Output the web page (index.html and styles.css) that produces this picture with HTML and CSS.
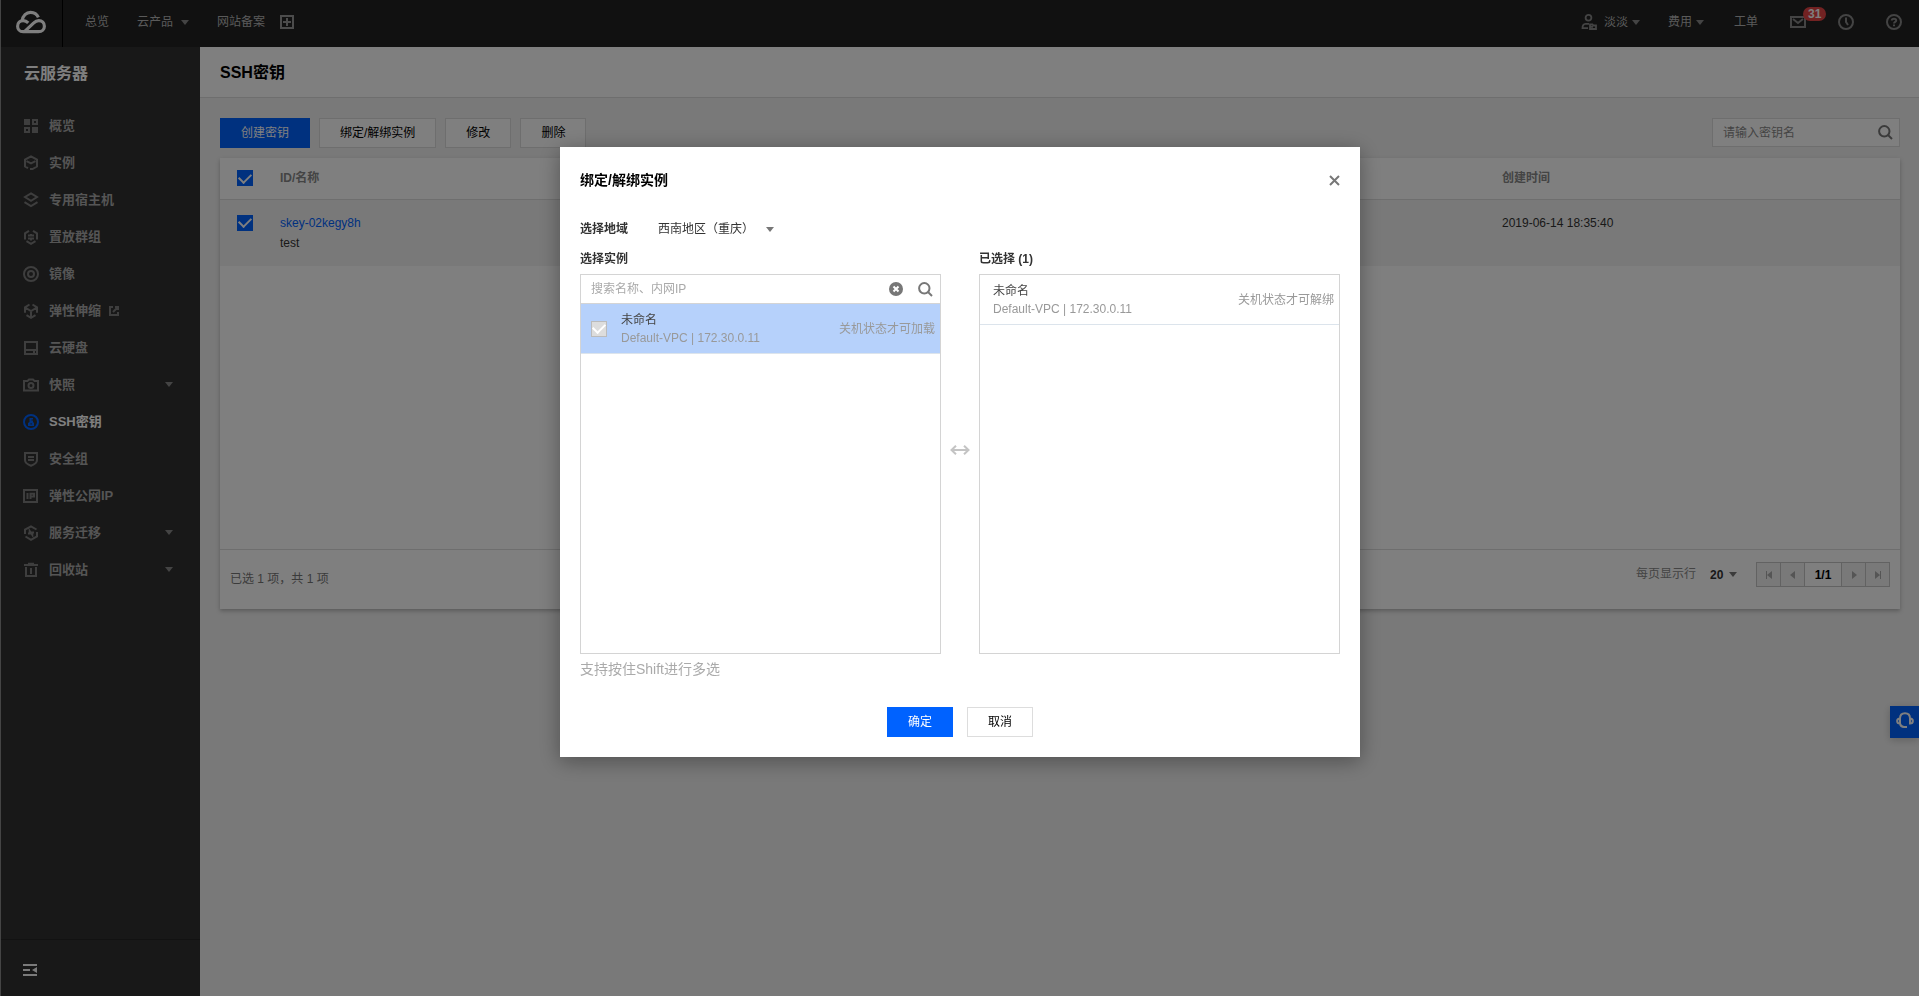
FILE: index.html
```html
<!DOCTYPE html>
<html lang="zh-CN">
<head>
<meta charset="utf-8">
<title>SSH密钥 - 云服务器</title>
<link rel="stylesheet" href="styles.css">
</head>
<body>
<div class="app">
  <header class="topbar">
    <a class="logo" href="#" aria-label="控制台首页">
      <svg width="32" height="24" viewBox="0 0 34 26" fill="none" stroke="#fff" stroke-width="3.400">
        <path d="M8.500 23.500C4.500 23.500 2.500 20.500 2.500 17.500C2.500 14 5 11.500 8.500 11.500C11 11.500 12.500 12.500 14 14M7.500 11.500C8 6 12 2.500 16.500 2.500C20.500 2.500 23.500 4.500 25 8M8.500 23.500H25C29 23.500 31.500 21 31.500 17.500C31.500 14 29 11.500 25.500 11.500C23 11.500 21.500 12.500 20 14L10.500 23"/>
      </svg>
    </a>
    <nav class="topnav">
      <a href="#">总览</a>
      <a href="#" class="nav-products">云产品<i class="caret"></i></a>
      <a href="#" class="nav-beian">网站备案</a>
      <button class="plain" type="button" aria-label="添加">
        <svg width="14" height="14" viewBox="0 0 14 14" fill="none" stroke="#999" stroke-width="2"><path d="M1 1h12v12H1zM7 3v8M3 7h8"/></svg>
      </button>
    </nav>
    <div class="topnav topnav-right">
      <a href="#" class="user">
        <svg width="16" height="16" viewBox="0 0 16 16" fill="none" stroke="#888" stroke-width="1.800"><circle cx="7.500" cy="3.800" r="2.900"/><path d="M8 9.800H4.500C2.500 9.800 1.500 11.500 1.500 14.200H7M9 10.500h2.500l.8 1H15v3.500H9zM9 12.800h3"/></svg>
        淡淡<i class="caret"></i></a>
      <a href="#" class="nav-fee">费用<i class="caret"></i></a>
      <a href="#" class="nav-ticket">工单</a>
      <a href="#" class="mail" aria-label="消息">
        <svg width="16" height="16" viewBox="0 0 16 16" fill="none" stroke="#888" stroke-width="2"><path d="M1 3h14v10H1zM3 5l5 4 5-4"/></svg>
        <span class="badge">31</span>
      </a>
      <a href="#" class="nav-icon" aria-label="历史">
        <svg width="16" height="16" viewBox="0 0 16 16" fill="none" stroke="#888" stroke-width="2"><circle cx="8" cy="8" r="7"/><path d="M8 3.500V8l2 3"/></svg>
      </a>
      <a href="#" class="nav-icon" aria-label="帮助">
        <svg width="16" height="16" viewBox="0 0 16 16" fill="none" stroke="#888" stroke-width="2"><circle cx="8" cy="8" r="7"/><path d="M5.800 6.500C5.800 4 10.200 4 10.200 6.500C10.200 8 8 7.800 8 9.600M8 10.600v1.600"/></svg>
      </a>
    </div>
  </header>

  <div class="body">
    <aside class="sidebar">
      <h2 class="side-title">云服务器</h2>
      <nav class="side-nav">
        <a href="#"><svg class="ico" viewBox="0 0 16 16"><path fill="currentColor" stroke="none" d="M1 1h6v6H1zM1 9m8 0h6v6H9z"/><path d="M10 2h4v4h-4zM2 10h4v4H2z"/></svg>概览</a>
        <a href="#"><svg class="ico" viewBox="0 0 16 16"><path d="M5 13.200L2 11.500V4.700L8 1.300l6 3.400v6.800l-4.500 2.600H7M3.500 6.200L8 8.500l4.500-2.300"/></svg>实例</a>
        <a href="#"><svg class="ico" viewBox="0 0 16 16"><path d="M8 1.300l6 3.700L8 8.800 2 5zM1.500 10.200L8 14.200l6.500-4"/></svg>专用宿主机</a>
        <a href="#"><svg class="ico" viewBox="0 0 16 16"><path d="M6 1.800L2 4.400v6M10 1.800l4 2.600v6M3.500 12.200L8 14.800l4.500-2.600M5 6.500h6M5 9.500h6M8 5v1M8 10v1.500"/></svg>置放群组</a>
        <a href="#"><svg class="ico" viewBox="0 0 16 16"><circle cx="8" cy="8" r="7"/><circle cx="8" cy="8" r="3"/></svg>镜像</a>
        <a href="#"><svg class="ico" viewBox="0 0 16 16"><path d="M6.500 1.500L2 4.300v5.500M9.500 1.500L14 4.300v5.500M3 5l5 3 5-3M8 8v7M3.500 12.200L8 14.800l4.500-2.600"/></svg>弹性伸缩<svg class="ext" width="10" height="10" viewBox="0 0 10 10"><path d="M4 1H1v8h8V6M6 1h3v3M9 1L4 6"/></svg></a>
        <a href="#"><svg class="ico" viewBox="0 0 16 16"><path d="M2 2h12v12H2zM2 10h12M11 10v4"/></svg>云硬盘</a>
        <a href="#"><svg class="ico" viewBox="0 0 16 16"><path d="M1 4h3.500L6 2.500h4L11.500 4H15v9.500H1z"/><circle cx="8" cy="8.500" r="2.500"/></svg>快照<i class="caret"></i></a>
        <a href="#" class="active" aria-current="page"><svg class="ico" viewBox="0 0 16 16"><circle cx="8" cy="8" r="7"/><path fill="currentColor" stroke="none" d="M6.500 4H10v1.500H8.500V6.500H10v1.500l1 1V12H5V9l1.500-1z"/><path fill="#303030" stroke="none" d="M7.500 9.300h1.200v1.200H7.500z"/></svg>SSH密钥</a>
        <a href="#"><svg class="ico" viewBox="0 0 16 16"><path d="M2 2h12v7C14 12 10 14 8 14.700 6 14 2 12 2 9zM5 6h6M5 9h6"/></svg>安全组</a>
        <a href="#"><svg class="ico" viewBox="0 0 16 16"><path d="M1 2h13v12H1zM4.500 5v6M7.500 11V5.800h3.500v2.700H7.500"/></svg>弹性公网IP</a>
        <a href="#"><svg class="ico" viewBox="0 0 16 16"><path d="M2 9V4.700L8 1.300l5.500 3.200M14 7v4.500l-6 3.300-5.500-3.300M5 8.500h1.700V6l2.600 4V7.500H11"/></svg>服务迁移<i class="caret"></i></a>
        <a href="#"><svg class="ico" viewBox="0 0 16 16"><path d="M1 3h14M5 1.800h6M3 5v9h10V5M8 6v6"/></svg>回收站<i class="caret"></i></a>
      </nav>
      <div class="side-foot">
        <button class="plain" type="button" aria-label="收起菜单">
          <svg width="14" height="12" viewBox="0 0 14 12" fill="#f4f4f4"><path d="M0 0h14v2H0zM0 5h7v2H0zM0 10h14v2H0zM9 6l5-3v6z"/></svg>
        </button>
      </div>
    </aside>

    <main class="main">
      <div class="page-head"><h1>SSH密钥</h1></div>
      <div class="content">
        <div class="toolbar">
          <button class="btn primary" type="button">创建密钥</button>
          <button class="btn" type="button">绑定/解绑实例</button>
          <button class="btn" type="button">修改</button>
          <button class="btn" type="button">删除</button>
          <div class="search">
            <input type="text" placeholder="请输入密钥名" aria-label="请输入密钥名">
            <button class="plain" type="button" aria-label="搜索"><svg width="15" height="15" viewBox="0 0 15 15" fill="none" stroke="#777" stroke-width="2"><circle cx="6.300" cy="6.300" r="5.200"/><path d="M10 10l4 4"/></svg></button>
          </div>
        </div>
        <section class="card">
          <div class="table-area">
            <table class="table">
              <thead>
                <tr><th class="col-check"><input type="checkbox" class="check" checked aria-label="全选"></th><th>ID/名称</th><th class="col-time">创建时间</th></tr>
              </thead>
              <tbody>
                <tr><td class="col-check"><input type="checkbox" class="check" checked aria-label="选择 skey-02kegy8h"></td><td><a href="#">skey-02kegy8h</a><br>test</td><td>2019-06-14 18:35:40</td></tr>
              </tbody>
            </table>
          </div>
          <div class="card-foot">
            <p class="summary">已选 1 项，共 1 项</p>
            <div class="paging">
              <label for="size">每页显示行</label>
              <span class="pick size-pick"><select id="size"><option>20</option></select><i class="caret"></i></span>
              <div class="pager">
                <button type="button" disabled aria-label="首页"><svg width="8" height="8" viewBox="0 0 8 8"><path d="M1 0h1v8H1zM7 0v8L2 4z"/></svg></button>
                <button type="button" disabled aria-label="上一页"><svg width="8" height="8" viewBox="0 0 8 8"><path d="M6 0v8L1 4z"/></svg></button>
                <span class="page-no">1/1</span>
                <button type="button" disabled aria-label="下一页"><svg width="8" height="8" viewBox="0 0 8 8"><path d="M2 0v8l5-4z"/></svg></button>
                <button type="button" disabled aria-label="末页"><svg width="8" height="8" viewBox="0 0 8 8"><path d="M6 0h1v8H6zM1 0v8l5-4z"/></svg></button>
              </div>
            </div>
          </div>
        </section>
      </div>
    </main>
  </div>
  <button class="support" type="button" aria-label="在线客服">
    <svg width="18" height="17" viewBox="0 0 18 17" fill="none" stroke="#fff" stroke-width="2"><path d="M4 11V6.500C4 3 6 1.200 9 1.200S14 3 14 6.500V11M4 6.500C.2 6.500.2 11.500 4 11.500zM14 6.500c3.800 0 3.800 5 0 5zM4 11.500C4.500 14 6 15 8 15h3"/></svg>
  </button>
</div>

<div class="overlay">
  <div class="modal" role="dialog" aria-modal="true" aria-labelledby="dlg-title">
    <div class="modal-head">
      <h3 id="dlg-title">绑定/解绑实例</h3>
      <button class="plain" type="button" aria-label="关闭"><svg width="11" height="11" viewBox="0 0 11 11" fill="none" stroke="#777" stroke-width="2"><path d="M1 1l9 9M10 1l-9 9"/></svg></button>
    </div>
    <div class="region">
      <label for="region">选择地域</label>
      <span class="pick region-pick"><select id="region"><option>西南地区（重庆）</option></select><i class="caret"></i></span>
    </div>
    <div class="transfer">
      <div class="pane">
        <h4>选择实例</h4>
        <div class="box">
          <div class="box-search">
            <input type="text" placeholder="搜索名称、内网IP" aria-label="搜索名称、内网IP">
            <button class="plain" type="button" aria-label="清除"><svg width="14" height="14" viewBox="0 0 14 14"><circle cx="7" cy="7" r="7" fill="#777"/><path d="M4.500 4.500l5 5M9.500 4.500l-5 5" stroke="#fff" stroke-width="2"/></svg></button>
            <button class="plain" type="button" aria-label="搜索"><svg width="15" height="15" viewBox="0 0 15 15" fill="none" stroke="#777" stroke-width="2"><circle cx="6.300" cy="6.300" r="5.200"/><path d="M10 10l4 4"/></svg></button>
          </div>
          <label class="item selected">
            <input type="checkbox" class="check" checked disabled>
            <span class="item-text"><b>未命名</b><span>Default-VPC | 172.30.0.11</span></span>
            <span class="item-note">关机状态才可加载</span>
          </label>
        </div>
      </div>
      <svg class="swap" width="20" height="10" viewBox="0 0 20 10" fill="none" stroke="#c4c4c4" stroke-width="2"><path d="M1.500 5h17M6 .7L1.500 5 6 9.300M14 .7L18.500 5 14 9.300"/></svg>
      <div class="pane">
        <h4>已选择 (1)</h4>
        <div class="box">
          <div class="item">
            <span class="item-text"><b>未命名</b><span>Default-VPC | 172.30.0.11</span></span>
            <span class="item-note">关机状态才可解绑</span>
          </div>
        </div>
      </div>
    </div>
    <p class="hint">支持按住Shift进行多选</p>
    <div class="modal-foot">
      <button class="btn primary" type="button">确定</button>
      <button class="btn" type="button">取消</button>
    </div>
  </div>
</div>
</body>
</html>
```

FILE: styles.css
```css
* { box-sizing: border-box; }
body, h1, h2, h3, h4, p { margin: 0; }
body, input, button, select {
  font-family: "Liberation Sans", "Noto Sans CJK SC", sans-serif;
  font-size: 12px;
  line-height: 20px;
}
body { color: #333; }
a { color: inherit; text-decoration: none; }
svg { display: block; flex: none; }
.plain { display: flex; padding: 0; border: 0; background: none; }

.caret {
  flex: none;
  border: 4px solid transparent;
  border-top: 5px solid #888;
  border-bottom: 0;
}

.app {
  display: flex;
  flex-direction: column;
  height: 100vh;
  border-left: 1px solid #888;
  background: #f2f2f2;
}

/* top bar */
.topbar { display: flex; flex: none; height: 47px; background: #222; color: #b4b4b4; }
.logo {
  display: flex;
  align-items: center;
  justify-content: center;
  width: 62px;
  padding: 0 2px 4px 0;
  border-right: 1px solid #000;
}
.topnav { display: flex; align-items: center; padding: 0 0 3px 22px; }
.topnav a { display: flex; align-items: center; }
.topnav .caret { margin-left: 4px; }
.nav-products { margin-left: 28px; }
.topnav .nav-products .caret { margin-left: 8px; }
.nav-beian { margin: 0 15px 0 28px; }
.topnav-right { margin-left: auto; padding-right: 17px; }
.user svg { margin-right: 7px; }
.nav-fee { margin-left: 28px; }
.nav-ticket { margin: 0 32px 0 30px; }
.mail { position: relative; }
.badge {
  position: absolute;
  left: 13px;
  top: -7px;
  padding: 0 5px;
  border-radius: 7px;
  background: #e54545;
  color: #fff;
  font-weight: bold;
  line-height: 14px;
}
.nav-icon { margin-left: 32px; }

/* side bar */
.body { display: flex; flex: 1; min-height: 0; }
.sidebar { display: flex; flex: none; flex-direction: column; width: 199px; background: #303030; }
.side-title { padding: 15px 23px 0; color: #fff; font-size: 16px; line-height: 24px; }
.side-nav { flex: 1; padding-top: 21px; color: #aaa; font-size: 13px; font-weight: bold; }
.side-nav a { display: flex; align-items: center; height: 37px; padding: 0 27px 0 22px; }
.side-nav .active { color: #fff; }
.side-nav .caret { margin-left: auto; }
.ico { width: 16px; height: 16px; margin-right: 10px; color: #7c7c7c; }
.active .ico { color: #0062ff; }
.ico, .ext { fill: none; stroke: currentColor; stroke-width: 2; }
.ext { margin-left: 8px; color: #7c7c7c; }
.side-foot { padding: 24px 22px 20px; border-top: 1px solid #242424; }

/* content */
.main { flex: 1; min-width: 0; }
.page-head { padding: 14px 20px 12px; border-bottom: 1px solid #ddd; background: #fff; }
.page-head h1 { color: #000; font-size: 16px; line-height: 24px; }
.content { padding: 20px 19px 20px 20px; }
.toolbar { display: flex; gap: 9px; margin-bottom: 10px; }
.btn {
  height: 30px;
  padding: 0 20px;
  border: 1px solid #ddd;
  background: #fff;
  color: #000;
}
.btn.primary { border-color: #0062ff; background: #0062ff; color: #fff; }
.search {
  display: flex;
  align-items: center;
  width: 188px;
  height: 29px;
  margin-left: auto;
  padding: 0 6px 0 10px;
  border: 1px solid #ddd;
  background: #fff;
}
.search input, .box-search input {
  flex: 1;
  min-width: 0;
  padding: 0;
  border: 0;
  outline: 0;
  background: none;
}
.search input::placeholder { color: #888; }

.card { background: #fff; box-shadow: 0 2px 4px rgba(0, 0, 0, .25); }
.table-area { min-height: 391px; }
.table { width: 100%; border-collapse: collapse; table-layout: fixed; text-align: left; }
.table th { height: 41px; padding: 0; border-bottom: 1px solid #ddd; color: #888; }
.table td { padding: 13px 0; background: #f2f2f2; vertical-align: top; }
.table td a { color: #0062ff; }
.table .col-check { width: 60px; padding-left: 17px; }
.col-time { width: 398px; }
.table td.col-check { padding-top: 15px; }

.check {
  display: grid;
  flex: none;
  width: 16px;
  height: 16px;
  margin: 0;
  place-items: center;
  appearance: none;
  background: #0062ff;
}
.check::before {
  width: 10px;
  height: 6px;
  margin-top: -3px;
  border: solid #fff;
  border-width: 0 0 2px 2px;
  content: "";
  transform: rotate(-45deg);
}
.check:disabled { border: 1px solid #bbb; background: #ddd; }

.card-foot { display: flex; padding: 12px 10px 20px; border-top: 1px solid #ddd; }
.summary { padding-top: 7px; color: #777; }
.paging { display: flex; margin-left: auto; color: #888; }
.paging label { padding-top: 2px; }
.pick { display: grid; align-items: center; }
.pick select, .pick .caret { grid-area: 1 / 1; }
.pick select { padding: 0; border: 0; outline: 0; appearance: none; background: none; color: #333; }
.pick .caret { justify-self: end; border-top-color: #777; pointer-events: none; }
.size-pick { width: 27px; height: 25px; margin: 0 19px 0 14px; }
.size-pick select { font-weight: bold; }
.pager { display: flex; height: 25px; border: 1px solid #c4c4c4; }
.pager button, .page-no { display: flex; align-items: center; justify-content: center; }
.pager button { width: 23px; padding: 0; border: 0; background: #f2f2f2; fill: #aaa; }
.pager > * + * { box-sizing: content-box; border-left: 1px solid #c4c4c4 !important; }
.page-no { width: 36px; color: #000; font-weight: bold; }

.support {
  position: fixed;
  right: 0;
  top: 706px;
  width: 29px;
  height: 32px;
  padding: 0 6px 4px;
  border: 0;
  background: #0062ff;
  box-shadow: 0 2px 8px rgba(0, 0, 0, .2);
}

/* dialog */
.overlay {
  position: fixed;
  inset: 0;
  padding: 147px 0 0 1px;
  background: rgba(0, 0, 0, .5);
}
.modal {
  width: 800px;
  max-width: 100%;
  margin: 0 auto;
  padding: 20px;
  background: #fff;
  box-shadow: 0 4px 20px rgba(0, 0, 0, .35);
}
.modal-head { display: flex; align-items: center; justify-content: space-between; height: 26px; margin-bottom: 26px; }
.modal-head h3 { color: #000; font-size: 14px; }
.region { display: flex; align-items: center; margin-bottom: 10px; font-weight: bold; }
.region-pick { width: 116px; margin-left: 30px; }
.transfer { display: flex; align-items: center; }
.pane { flex: 1; align-self: stretch; }
.pane h4 { margin-bottom: 5px; font-size: 12px; }
.swap { margin: 0 9px 4px; }
.box { height: 380px; border: 1px solid #d4d4d4; }
.box-search {
  display: flex;
  align-items: center;
  gap: 15px;
  height: 29px;
  padding: 0 7px 0 10px;
  border-bottom: 1px solid #d4d4d4;
}
.box-search input::placeholder { color: #aaa; }
.item {
  display: flex;
  align-items: center;
  height: 50px;
  padding: 0 5px 0 13px;
  border-bottom: 1px solid #dce4ec;
  color: #999;
}
.item.selected { padding: 0 5px 0 10px; background: #b6d1fb; }
.item .check { margin-right: 14px; }
.item-text { display: grid; line-height: 18px; }
.item b { color: #444; font-weight: normal; }
.item-note { margin-left: auto; }
.hint { padding-top: 5px; color: #aaa; font-size: 14px; }
.modal-foot { display: flex; justify-content: center; gap: 14px; padding-top: 28px; }
```
